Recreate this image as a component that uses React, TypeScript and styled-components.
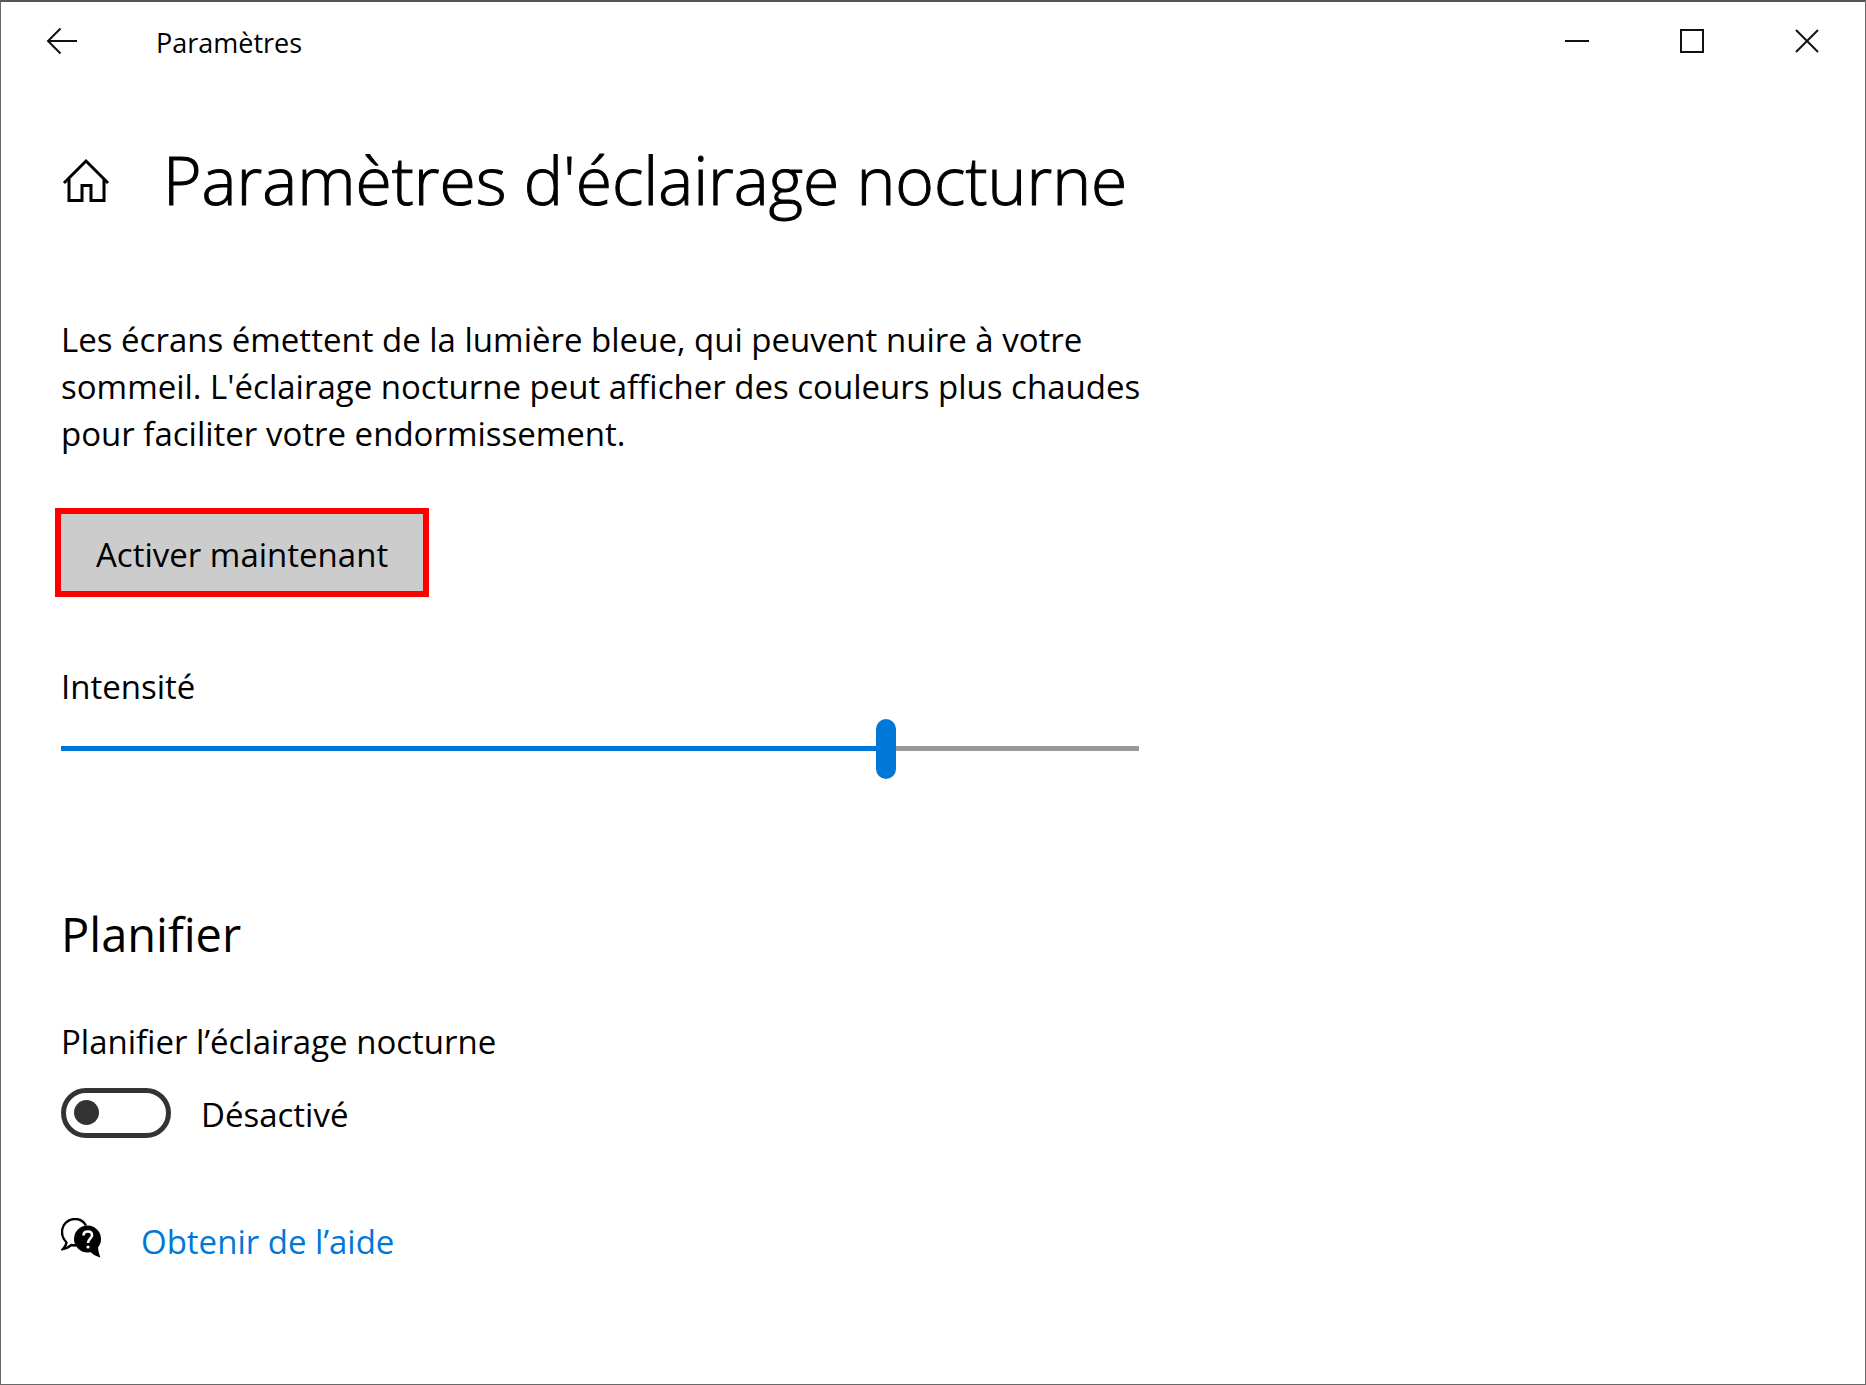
import React, { useState } from "react";
import styled, { createGlobalStyle } from "styled-components";

const ACCENT = "#0078d7";

const GlobalStyle = createGlobalStyle`
  *, *::before, *::after { box-sizing: border-box; }
  body {
    margin: 0;
    background: #fff;
    color: #000;
    font-family: "Open Sans", "Noto Sans", sans-serif;
    font-size: 33px;
    line-height: 47px;
  }
`;

const Window = styled.div`
  display: flex;
  flex-direction: column;
  min-height: 100vh;
  border: 1px solid #6b6a6b;
  border-top: 2px solid #565455;
  background: #fff;
`;

const TitleBar = styled.header`
  display: flex;
  align-items: center;
  height: 78px;
  padding-right: 1px;
`;

const WindowTitle = styled.span`
  flex: 1;
  padding: 4px 0 0 35px;
  font-size: 27px;
  line-height: 40px;
`;

const BarButton = styled.button<{ $width: number }>`
  display: flex;
  align-items: center;
  justify-content: center;
  width: ${(p) => p.$width}px;
  height: 100%;
  padding: 0;
  border: 0;
  background: none;
  color: #111;
`;

const Content = styled.main`
  display: flex;
  flex-direction: column;
  align-items: flex-start;
  width: 100%;
  max-width: 1198px;
  padding: 54px 60px 60px;
`;

const PageHeader = styled.div`
  display: flex;
  align-items: center;
  gap: 52px;
`;

const HomeButton = styled.button`
  display: flex;
  padding: 0;
  border: 0;
  background: none;
  color: #000;
`;

const PageTitle = styled.h1`
  margin: 0;
  font-size: 66px;
  font-weight: 300;
  line-height: 90px;
  -webkit-text-stroke: 1px #000;
`;

const Description = styled.p`
  margin: 92px -12px 57px 0;
`;

const ActionButton = styled.button`
  height: 77px;
  padding: 4px 35px 0;
  border: 0;
  outline: 6px solid #f00;
  background: #ccc;
  color: #000;
  font: inherit;
`;

const SliderLabel = styled.label`
  margin-top: 72px;
`;

const Slider = styled.input`
  appearance: none;
  width: 100%;
  height: 60px;
  margin: 9px 0 0;
  background: linear-gradient(${ACCENT}, ${ACCENT}) left 27px no-repeat, linear-gradient(#999, #999) left 27px no-repeat;

  &::-webkit-slider-thumb {
    appearance: none;
    width: 20px;
    height: 60px;
    border-radius: 10px;
    background: ${ACCENT};
  }
`;

const SectionTitle = styled.h2`
  margin: 125px 0 54px;
  font-size: 47px;
  font-weight: 400;
  line-height: 60px;
`;

const ToggleRow = styled.div`
  display: flex;
  align-items: center;
  gap: 30px;
  margin: 22px 0 76px;
`;

const ToggleState = styled.span`
  padding-top: 4px;
`;

const Toggle = styled.input`
  appearance: none;
  display: flex;
  align-items: center;
  width: 110px;
  height: 50px;
  margin: 0;
  padding: 0 8px;
  border: 5px solid #333;
  border-radius: 25px;

  &::before {
    content: "";
    width: 25px;
    height: 25px;
    border-radius: 50%;
    background: #333;
  }

  &:checked {
    justify-content: flex-end;
    border-color: ${ACCENT};
    background: ${ACCENT};
  }

  &:checked::before {
    background: #fff;
  }
`;

const HelpRow = styled.div`
  display: flex;
  align-items: center;
  gap: 40px;
`;

const HelpLink = styled.a`
  padding-top: 4px;
  color: ${ACCENT};
  text-decoration: none;
`;

const BackIcon = () => (
  <svg width="32" height="28" viewBox="0 0 32 28" fill="none" stroke="currentColor" strokeWidth="2" aria-hidden="true">
    <path d="M32 14H3M15.500 1.500L3 14L15.500 26.500" />
  </svg>
);

const MinimizeIcon = () => (
  <svg width="24" height="24" viewBox="0 0 24 24" stroke="currentColor" strokeWidth="2" aria-hidden="true">
    <path d="M0 12H24" />
  </svg>
);

const MaximizeIcon = () => (
  <svg width="24" height="24" viewBox="0 0 24 24" fill="none" stroke="currentColor" strokeWidth="2" aria-hidden="true">
    <path d="M1 1H23V23H1Z" />
  </svg>
);

const CloseIcon = () => (
  <svg width="24" height="24" viewBox="0 0 24 24" fill="none" stroke="currentColor" strokeWidth="2" aria-hidden="true">
    <path d="M1 1L23 23M23 1L1 23" />
  </svg>
);

const HomeIcon = () => (
  <svg width="50" height="46" viewBox="0 0 50 46" fill="none" stroke="currentColor" strokeWidth="3" aria-hidden="true">
    <path d="M3 27L25 5L47 27" />
    <path d="M8 23V44.500H21V29.500H30V44.500H43V23" />
  </svg>
);

const HelpIcon = () => (
  <svg width="40" height="44" viewBox="0 0 40 44" fill="none" aria-hidden="true">
    <path
      d="M25 7.500C22.500 3 18.500 1 14 1C7 1 1 6.500 1 14C1 18 2.500 21.500 5.500 24.500C5.200 27 4 29 2 31C5.500 30.500 8 29 10.500 27L15 27.500"
      stroke="#000"
      strokeWidth="2.400"
    />
    <circle cx="26.500" cy="21" r="13.500" fill="#000" />
    <path d="M29 33.500L37 28C37 32 38 36 39.500 39.500C35.500 38.500 31.500 36.500 29 33.500Z" fill="#000" />
    <path d="M22.500 17.500C22.500 14.500 24.500 13.500 27 13.500C29.500 13.500 31 15 31 17.200C31 20.500 27 21 27 25" stroke="#fff" strokeWidth="2.600" />
    <circle cx="27" cy="29" r="1.600" fill="#fff" />
  </svg>
);

export default function App() {
  const [intensity, setIntensity] = useState(77);
  const [scheduled, setScheduled] = useState(false);

  return (
    <>
      <GlobalStyle />
      <Window>
        <TitleBar>
          <BarButton $width={120} aria-label="Retour">
            <BackIcon />
          </BarButton>
          <WindowTitle>Paramètres</WindowTitle>
          <BarButton $width={115} aria-label="Réduire">
            <MinimizeIcon />
          </BarButton>
          <BarButton $width={115} aria-label="Agrandir">
            <MaximizeIcon />
          </BarButton>
          <BarButton $width={115} aria-label="Fermer">
            <CloseIcon />
          </BarButton>
        </TitleBar>
        <Content>
          <PageHeader>
            <HomeButton aria-label="Accueil">
              <HomeIcon />
            </HomeButton>
            <PageTitle>Paramètres d'éclairage nocturne</PageTitle>
          </PageHeader>
          <Description>
            Les écrans émettent de la lumière bleue, qui peuvent nuire à votre sommeil. L'éclairage nocturne peut
            afficher des couleurs plus chaudes pour faciliter votre endormissement.
          </Description>
          <ActionButton>Activer maintenant</ActionButton>
          <SliderLabel htmlFor="intensity">Intensité</SliderLabel>
          <Slider
            id="intensity"
            type="range"
            min={0}
            max={100}
            value={intensity}
            onChange={(e) => setIntensity(Number(e.target.value))}
            style={{ backgroundSize: `${intensity}% 5px, 100% 5px` }}
          />
          <SectionTitle>Planifier</SectionTitle>
          <label htmlFor="schedule">Planifier l’éclairage nocturne</label>
          <ToggleRow>
            <Toggle
              id="schedule"
              type="checkbox"
              role="switch"
              checked={scheduled}
              onChange={(e) => setScheduled(e.target.checked)}
            />
            <ToggleState>{scheduled ? "Activé" : "Désactivé"}</ToggleState>
          </ToggleRow>
          <HelpRow>
            <HelpIcon />
            <HelpLink href="#aide">Obtenir de l’aide</HelpLink>
          </HelpRow>
        </Content>
      </Window>
    </>
  );
}
